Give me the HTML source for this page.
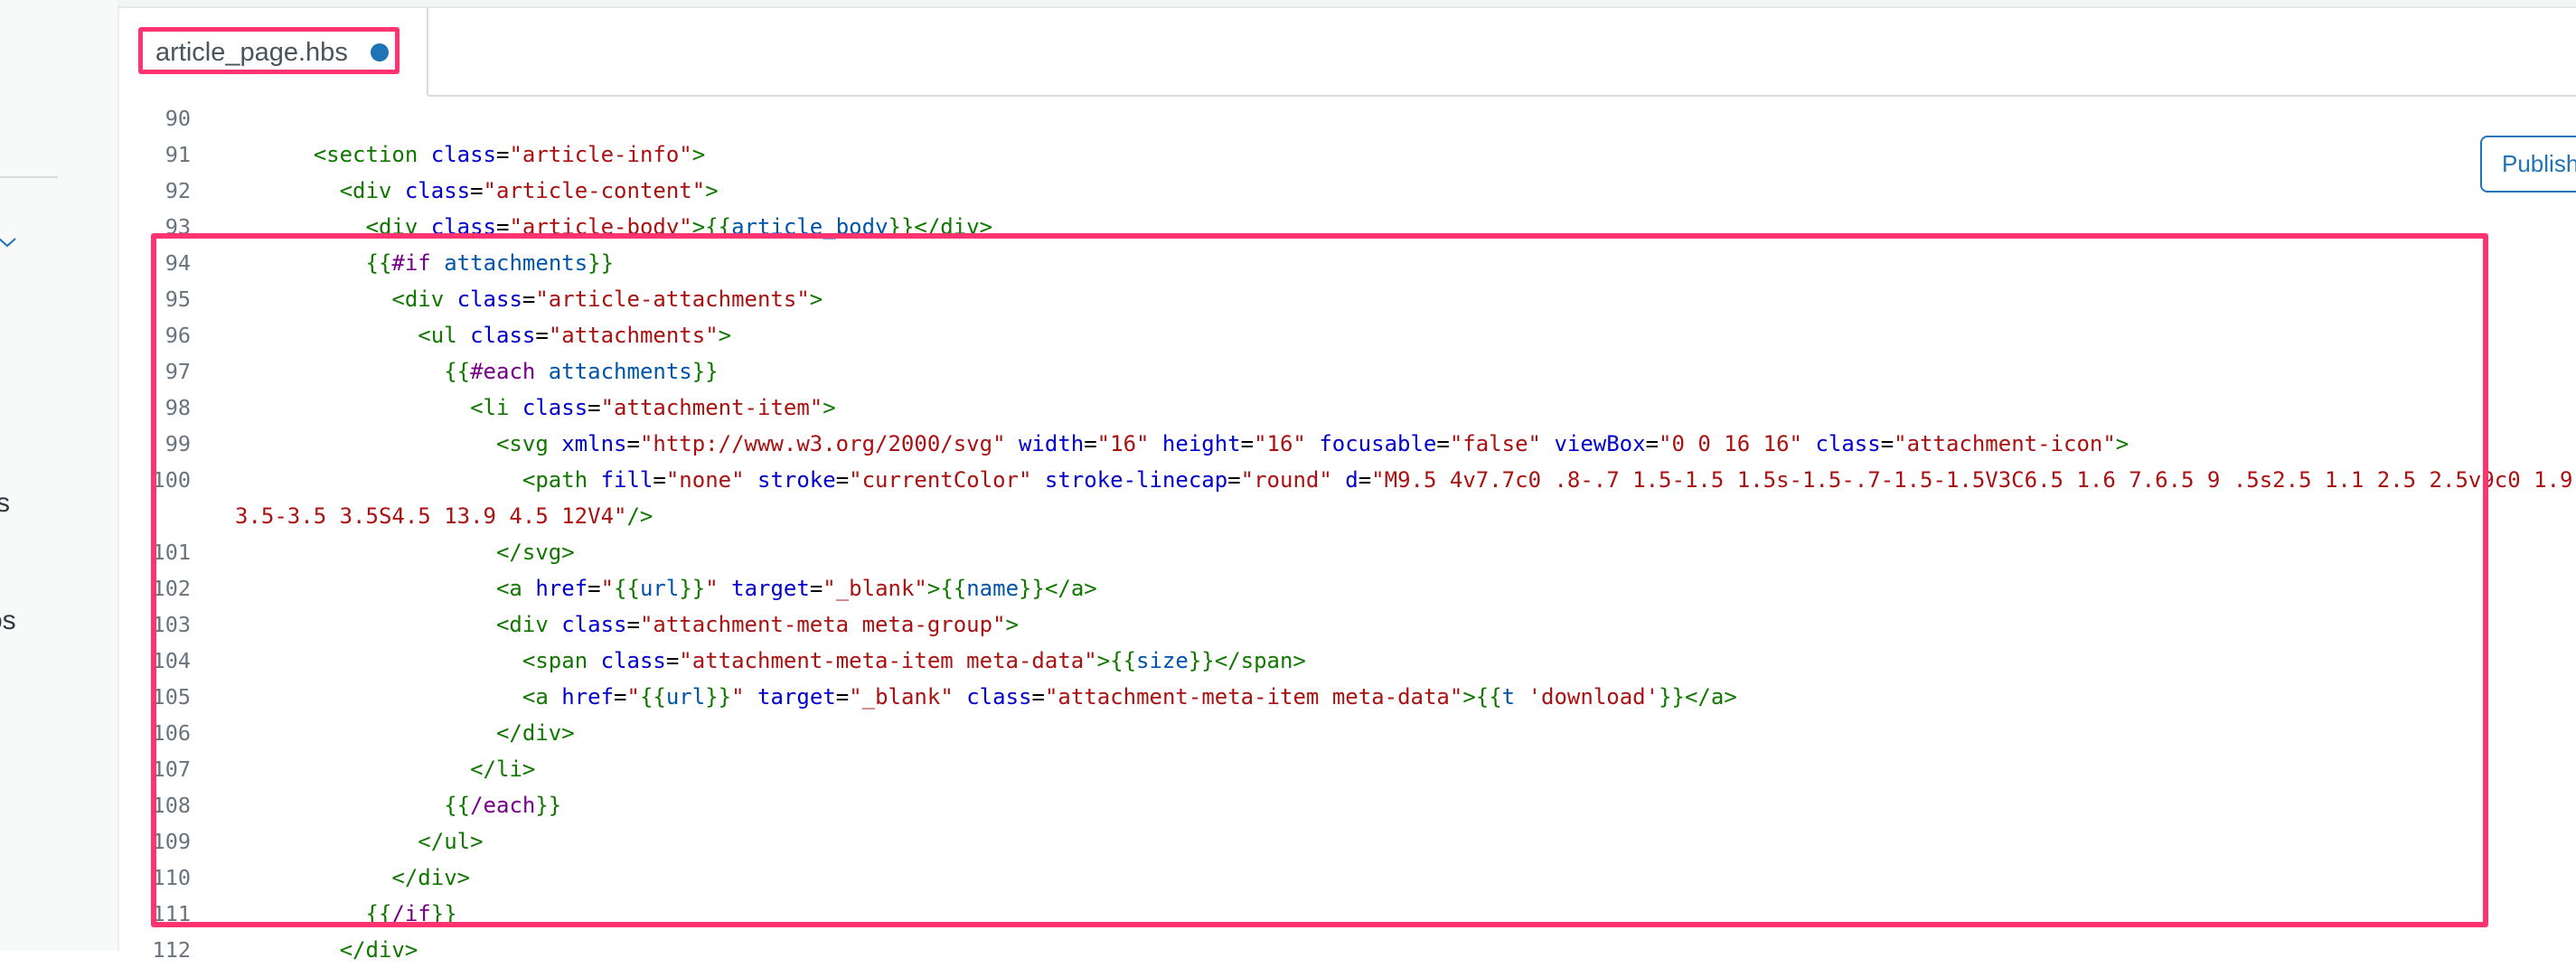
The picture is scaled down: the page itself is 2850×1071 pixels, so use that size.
<!DOCTYPE html>
<html><head><meta charset="utf-8"><style>
body{margin:0;width:2850px;height:1052px;overflow:hidden;background:#fff;position:relative;font-family:"Liberation Sans",sans-serif}
.side{position:absolute;left:0;top:0;width:130px;height:1052px;background:#f8f9f9;border-right:2px solid #eceeef}
.topstrip{position:absolute;left:130px;top:0;width:2720px;height:7px;background:#f3f4f4;border-bottom:2px solid #e4e6e8}
.tabarea{position:absolute;left:472px;top:9px;width:2400px;height:96px;border-left:2px solid #d8dcde;border-bottom:2px solid #d8dcde;border-radius:0 0 0 3px}
.pink{position:absolute;border:5px solid #ff3370;border-radius:3px}
.tabtxt{position:absolute;left:172px;top:40px;font-size:29px;color:#49545c;line-height:36px}
.dot{position:absolute;left:410px;top:48px;width:20px;height:20px;border-radius:50%;background:#1f73b7}
.code{position:absolute;left:0;top:111px;width:2850px;font-family:"DejaVu Sans Mono","Liberation Mono",monospace;font-size:24px;line-height:40px}
.row{height:40px;position:relative}
.ln{position:absolute;left:130px;width:81px;text-align:right;color:#68737d;font-size:23.5px}
.tx{position:absolute;left:260px;width:2590px;overflow:hidden;white-space:pre}
.t{color:#117700}.a{color:#0000cc}.s{color:#aa1111}.k{color:#770088}.v{color:#0055aa}.b{color:#117700}
.pub{position:absolute;left:2744px;top:150px;width:140px;height:63px;border:2px solid #1f73b7;border-radius:8px;box-sizing:border-box;color:#1f73b7;font-size:26px;line-height:59px;padding-left:22px}
</style></head><body>
<div class="side">
<div style="position:absolute;left:0;top:195px;width:64px;height:2px;background:#d8dcde"></div>
<svg style="position:absolute;left:0;top:262px" width="18" height="12" viewBox="0 0 18 12"><path d="M-1 2 L8 10 L17 2" fill="none" stroke="#1f73b7" stroke-width="2"/></svg>
<div style="position:absolute;left:-4px;top:540px;font-size:30px;color:#2f3941">s</div>
<div style="position:absolute;left:-14px;top:670px;font-size:30px;color:#2f3941">os</div>
</div>
<div class="topstrip"></div>
<div class="tabarea"></div>
<div class="tabtxt">article_page.hbs</div>
<div class="dot"></div>
<div class="pink" style="left:153px;top:30px;width:279px;height:42px"></div>
<div class="pub">Publish</div>
<div class="code"><div class="row"><span class="ln">90</span><span class="tx"></span></div><div class="row"><span class="ln">91</span><span class="tx">      <span class="t">&lt;section</span> <span class="a">class</span>=<span class="s">"article-info"</span><span class="t">&gt;</span></span></div><div class="row"><span class="ln">92</span><span class="tx">        <span class="t">&lt;div</span> <span class="a">class</span>=<span class="s">"article-content"</span><span class="t">&gt;</span></span></div><div class="row"><span class="ln">93</span><span class="tx">          <span class="t">&lt;div</span> <span class="a">class</span>=<span class="s">"article-body"</span><span class="t">&gt;</span><span class="b">{{</span><span class="v">article_body</span><span class="b">}}</span><span class="t">&lt;/div&gt;</span></span></div><div class="row"><span class="ln">94</span><span class="tx">          <span class="b">{{</span><span class="k">#if</span> <span class="v">attachments</span><span class="b">}}</span></span></div><div class="row"><span class="ln">95</span><span class="tx">            <span class="t">&lt;div</span> <span class="a">class</span>=<span class="s">"article-attachments"</span><span class="t">&gt;</span></span></div><div class="row"><span class="ln">96</span><span class="tx">              <span class="t">&lt;ul</span> <span class="a">class</span>=<span class="s">"attachments"</span><span class="t">&gt;</span></span></div><div class="row"><span class="ln">97</span><span class="tx">                <span class="b">{{</span><span class="k">#each</span> <span class="v">attachments</span><span class="b">}}</span></span></div><div class="row"><span class="ln">98</span><span class="tx">                  <span class="t">&lt;li</span> <span class="a">class</span>=<span class="s">"attachment-item"</span><span class="t">&gt;</span></span></div><div class="row"><span class="ln">99</span><span class="tx">                    <span class="t">&lt;svg</span> <span class="a">xmlns</span>=<span class="s">"http://www.w3.org/2000/svg"</span> <span class="a">width</span>=<span class="s">"16"</span> <span class="a">height</span>=<span class="s">"16"</span> <span class="a">focusable</span>=<span class="s">"false"</span> <span class="a">viewBox</span>=<span class="s">"0 0 16 16"</span> <span class="a">class</span>=<span class="s">"attachment-icon"</span><span class="t">&gt;</span></span></div><div class="row"><span class="ln">100</span><span class="tx">                      <span class="t">&lt;path</span> <span class="a">fill</span>=<span class="s">"none"</span> <span class="a">stroke</span>=<span class="s">"currentColor"</span> <span class="a">stroke-linecap</span>=<span class="s">"round"</span> <span class="a">d</span>=<span class="s">"M9.5 4v7.7c0 .8-.7 1.5-1.5 1.5s-1.5-.7-1.5-1.5V3C6.5 1.6 7.6.5 9 .5s2.5 1.1 2.5 2.5v9c0 1.9-1.6</span></span></div><div class="row"><span class="ln"></span><span class="tx"><span class="s">3.5-3.5 3.5S4.5 13.9 4.5 12V4"</span><span class="t">/&gt;</span></span></div><div class="row"><span class="ln">101</span><span class="tx">                    <span class="t">&lt;/svg&gt;</span></span></div><div class="row"><span class="ln">102</span><span class="tx">                    <span class="t">&lt;a</span> <span class="a">href</span>=<span class="s">"</span><span class="b">{{</span><span class="v">url</span><span class="b">}}</span><span class="s">"</span> <span class="a">target</span>=<span class="s">"_blank"</span><span class="t">&gt;</span><span class="b">{{</span><span class="v">name</span><span class="b">}}</span><span class="t">&lt;/a&gt;</span></span></div><div class="row"><span class="ln">103</span><span class="tx">                    <span class="t">&lt;div</span> <span class="a">class</span>=<span class="s">"attachment-meta meta-group"</span><span class="t">&gt;</span></span></div><div class="row"><span class="ln">104</span><span class="tx">                      <span class="t">&lt;span</span> <span class="a">class</span>=<span class="s">"attachment-meta-item meta-data"</span><span class="t">&gt;</span><span class="b">{{</span><span class="v">size</span><span class="b">}}</span><span class="t">&lt;/span&gt;</span></span></div><div class="row"><span class="ln">105</span><span class="tx">                      <span class="t">&lt;a</span> <span class="a">href</span>=<span class="s">"</span><span class="b">{{</span><span class="v">url</span><span class="b">}}</span><span class="s">"</span> <span class="a">target</span>=<span class="s">"_blank"</span> <span class="a">class</span>=<span class="s">"attachment-meta-item meta-data"</span><span class="t">&gt;</span><span class="b">{{</span><span class="v">t</span> <span class="s">'download'</span><span class="b">}}</span><span class="t">&lt;/a&gt;</span></span></div><div class="row"><span class="ln">106</span><span class="tx">                    <span class="t">&lt;/div&gt;</span></span></div><div class="row"><span class="ln">107</span><span class="tx">                  <span class="t">&lt;/li&gt;</span></span></div><div class="row"><span class="ln">108</span><span class="tx">                <span class="b">{{</span><span class="k">/each</span><span class="b">}}</span></span></div><div class="row"><span class="ln">109</span><span class="tx">              <span class="t">&lt;/ul&gt;</span></span></div><div class="row"><span class="ln">110</span><span class="tx">            <span class="t">&lt;/div&gt;</span></span></div><div class="row"><span class="ln">111</span><span class="tx">          <span class="b">{{</span><span class="k">/if</span><span class="b">}}</span></span></div><div class="row"><span class="ln">112</span><span class="tx">        <span class="t">&lt;/div&gt;</span></span></div></div>
<div class="pink" style="left:167px;top:258px;width:2574px;height:756px;border-width:6px"></div>
</body></html>
